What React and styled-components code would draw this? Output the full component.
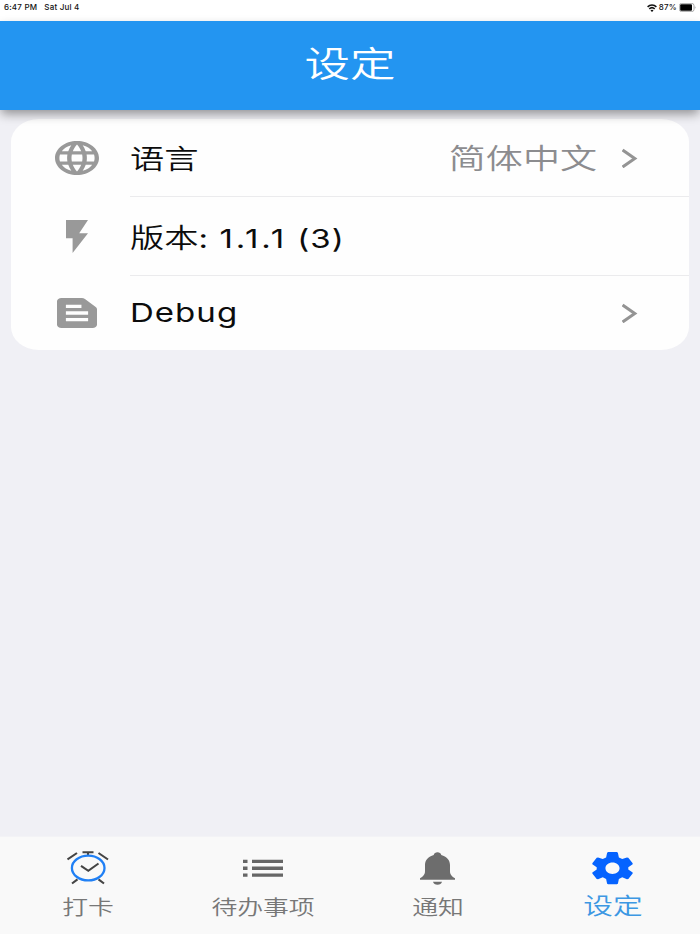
import React from 'react';
import styled, { createGlobalStyle } from 'styled-components';

const App = () => {
  return (
    <Screen>
      <GlobalStyle />
      <StatusBar>
        <StatusText>
          <span>6:47 PM</span>
          <span>Sat Jul 4</span>
        </StatusText>
        <StatusIcons>
          <WifiIcon />
          <span>87%</span>
          <BatteryIcon />
        </StatusIcons>
      </StatusBar>

      <Header>
        <Title>设定</Title>
      </Header>

      <Content>
        <Card>
          <Row $height={77}>
            <IconCell>
              <GlobeIcon />
            </IconCell>
            <RowBody $divider>
              <Label>语言</Label>
              <Value>简体中文</Value>
              <ChevronIcon />
            </RowBody>
          </Row>
          <Row $height={79}>
            <IconCell $shift={1}>
              <FlashIcon />
            </IconCell>
            <RowBody $divider>
              <Label $shift={2}>
                版本
                <Latin>
                  : <Digits>1.1.1</Digits> (3)
                </Latin>
              </Label>
            </RowBody>
          </Row>
          <Row $height={75}>
            <IconCell>
              <DocumentIcon />
            </IconCell>
            <RowBody>
              <Label $shift={-1}>
                <Latin>Debug</Latin>
              </Label>
              <ChevronIcon />
            </RowBody>
          </Row>
        </Card>
      </Content>

      <TabBar>
        <Tab>
          <AlarmIcon />
          <TabLabel>打卡</TabLabel>
        </Tab>
        <Tab>
          <ListIcon />
          <TabLabel>待办事项</TabLabel>
        </Tab>
        <Tab>
          <BellIcon />
          <TabLabel>通知</TabLabel>
        </Tab>
        <Tab>
          <GearIcon />
          <TabLabel $active>设定</TabLabel>
        </Tab>
      </TabBar>
    </Screen>
  );
};

const WifiIcon = () => (
  <svg width="10" height="8" viewBox="0 0 10 8" fill="none" stroke="#111" strokeWidth="1.5">
    <path d="M.6 2.9C3.1.5 6.9.5 9.4 2.9" />
    <path d="M2.3 4.9c1.5-1.4 3.9-1.4 5.4 0" />
    <path d="M5 8L3.5 6.4c.8-.8 2.2-.8 3 0z" fill="#111" stroke="none" />
  </svg>
);

const BatteryIcon = () => (
  <svg width="17" height="9" viewBox="0 0 17 9">
    <rect x=".4" y=".4" width="14.6" height="8.2" rx="2.2" fill="#fff" stroke="#999" strokeWidth=".8" />
    <rect x="1.2" y="1.3" width="11.8" height="6.4" rx="1" fill="#000" />
    <path d="M15.7 3.2c1.2.4 1.2 2.2 0 2.6z" fill="#aaa" />
  </svg>
);

const GlobeIcon = () => (
  <svg width="44" height="34" viewBox="2 2 20 20" preserveAspectRatio="none" fill="#999">
    <path d="M11.99 2C6.47 2 2 6.48 2 12s4.47 10 9.99 10C17.52 22 22 17.52 22 12S17.52 2 11.99 2zm6.93 6h-2.95a15.65 15.65 0 0 0-1.38-3.56A8.03 8.03 0 0 1 18.92 8zM12 4.04c.83 1.2 1.48 2.53 1.91 3.96h-3.82c.43-1.43 1.08-2.76 1.91-3.96zM4.26 14C4.1 13.36 4 12.69 4 12s.1-1.36.26-2h3.38c-.08.66-.14 1.32-.14 2s.06 1.34.14 2H4.26zm.82 2h2.95c.32 1.25.78 2.45 1.38 3.56A7.987 7.987 0 0 1 5.08 16zm2.95-8H5.08a7.987 7.987 0 0 1 4.33-3.56A15.65 15.65 0 0 0 8.03 8zM12 19.96c-.83-1.2-1.48-2.53-1.91-3.96h3.82c-.43 1.43-1.08 2.76-1.91 3.96zM14.34 14H9.66c-.09-.66-.16-1.32-.16-2s.07-1.35.16-2h4.68c.09.65.16 1.32.16 2s-.07 1.34-.16 2zm.25 5.56c.6-1.11 1.06-2.31 1.38-3.56h2.95a8.03 8.03 0 0 1-4.33 3.56zM16.36 14c.08-.66.14-1.32.14-2s-.06-1.34-.14-2h3.38c.16.64.26 1.31.26 2s-.1 1.36-.26 2h-3.38z" />
  </svg>
);

const FlashIcon = () => (
  <svg width="22" height="33" viewBox="7 2 10 20" preserveAspectRatio="none" fill="#999">
    <path d="M7 2v11h3v9l7-12h-4l4-8z" />
  </svg>
);

const DocumentIcon = () => (
  <svg width="40" height="30" viewBox="3 3 18 18" preserveAspectRatio="none" fill="#999">
    <path d="M20.41 8.41l-4.83-4.83c-.37-.37-.88-.58-1.41-.58H5c-1.1 0-2 .9-2 2v14c0 1.1.9 2 2 2h14c1.1 0 2-.9 2-2V9.83c0-.53-.21-1.04-.59-1.42zM7 7h7v2H7V7zm10 10H7v-2h10v2zm0-4H7v-2h10v2z" />
  </svg>
);

const ChevronIcon = () => (
  <svg width="16" height="20" viewBox="0 0 16 20" fill="none" stroke="#949494" strokeWidth="3">
    <path d="M.6 2L12.8 10.6.6 19" />
  </svg>
);

const AlarmIcon = () => (
  <svg width="42" height="34" viewBox="0 0 42 34" fill="none" stroke="#444" strokeWidth="2.1">
    <path d="M.5 8.5L10 2M31.5 2L41 8.5M15.5 1.3h11M21 1.5V5M10.5 28.3L5 32.5M31.5 28.3l5.5 4.2" />
    <path d="M14 14.8l7.3 5L31.5 12.5" />
    <ellipse cx="21.2" cy="17" rx="16.3" ry="12.4" stroke="#2080f5" strokeWidth="2.3" />
  </svg>
);

const ListIcon = () => (
  <svg width="40" height="34" viewBox="0 0 40 34" fill="#666">
    <path d="M0 8.7h4.5V12H0zM9 8.7h31V12H9zM0 15.6h4.5v3.3H0zM9 15.6h31v3.3H9zM0 22.4h4.5v3.3H0zM9 22.4h31v3.3H9z" />
  </svg>
);

const BellIcon = () => (
  <svg width="36" height="34" viewBox="0 0 36 34" fill="#6d6d6d">
    <path d="M17.5 1.2c-2 0-3.3 1-3.8 2.7C8.5 5.4 5 8.800 5 14v6c0 3.200-1.200 5-5 7.300v1.400h35v-1.400c-3.800-2.300-5-4.100-5-7.300v-6c0-5.200-3.500-8.600-8.700-10.100-.5-1.700-1.800-2.700-3.800-2.700z" />
    <path d="M13 30.8h9c-.5 1.9-2.2 3-4.500 3s-4-1.100-4.500-3z" />
  </svg>
);

const GearIcon = () => (
  <svg width="41" height="34" viewBox="96 64 122 101" fill="#0563ff">
    <path
      fillRule="evenodd"
      d="M144 67h26l3 2 3 14 10 5 14-5 4 1 13 16v3l-13 9v7l13 9v3l-13 16-4 1-14-6-10 5-3 14-3 2h-26l-3-2-3-14-10-5-14 6-4-1-13-16v-3l13-9v-7l-13-9v-3l13-16 4-1 14 5 10-5 3-14zM157 98c-12 0-21 8-21 17s9 17 21 17 21-8 21-17-9-17-21-17z"
    />
  </svg>
);

const GlobalStyle = createGlobalStyle`
  body {
    margin: 0;
    background: #f0f0f5;
  }

  * {
    box-sizing: border-box;
  }

  svg {
    display: block;
    flex: none;
  }
`;

const Screen = styled.div`
  display: flex;
  flex-direction: column;
  width: 100%;
  height: 934px;
  overflow: hidden;
  background: #f0f0f5;
  font-family: 'Noto Sans CJK SC', sans-serif;
`;

const StatusBar = styled.div`
  display: flex;
  justify-content: space-between;
  align-items: center;
  height: 21px;
  padding: 0 4px 6px;
  background: #fff;
  color: #111;
  font-family: Inter, sans-serif;
  font-size: 8px;
  font-weight: 500;
  letter-spacing: 0.2px;
  line-height: 15px;
`;

const StatusText = styled.div`
  display: flex;
  gap: 7px;
`;

const StatusIcons = styled.div`
  display: flex;
  align-items: center;
  gap: 2px;
`;

const Header = styled.header`
  position: relative;
  z-index: 1;
  display: flex;
  justify-content: center;
  align-items: center;
  height: 89px;
  background: #2395f1;
  box-shadow: 0 5px 10px -1px rgba(0, 0, 0, 0.4);
`;

const Title = styled.h1`
  margin: 0;
  color: #fff;
  font-size: 35px;
  font-weight: 350;
  line-height: 50px;
  transform: translateY(-4px) scaleX(1.3);
`;

const Content = styled.main`
  flex: 1;
  padding: 9px 11px;
`;

const Card = styled.section`
  overflow: hidden;
  border-radius: 28px / 23px;
  background: #fefefe;
`;

const Row = styled.div`
  display: flex;
  height: ${({ $height }) => $height}px;
`;

const IconCell = styled.div`
  display: flex;
  justify-content: center;
  align-items: center;
  width: 119px;
  padding-left: 12px;
  padding-top: ${({ $shift = 0 }) => $shift * 2}px;
`;

const RowBody = styled.div`
  display: flex;
  flex: 1;
  align-items: center;
  padding-right: 51px;
  box-shadow: ${({ $divider }) => ($divider ? '0 1px 0 #ebebed' : 'none')};
`;

const Label = styled.span`
  margin-right: auto;
  color: #0c0c0c;
  font-size: 27px;
  font-weight: 350;
  line-height: 40px;
  white-space: nowrap;
  transform: translateY(${({ $shift = 0 }) => $shift}px) scaleX(1.27);
  transform-origin: left center;
`;

const Latin = styled.span`
  font-family: Inter, sans-serif;
  font-size: 26px;
  font-weight: 400;
  letter-spacing: 0.8px;
`;

const Digits = styled.span`
  letter-spacing: 2.2px;
`;

const Value = styled.span`
  margin-right: 25px;
  color: #8c8c8f;
  font-size: 28.5px;
  font-weight: 350;
  line-height: 40px;
  white-space: nowrap;
  transform: translateY(-1px) scaleX(1.3);
  transform-origin: right center;
`;

const TabBar = styled.nav`
  display: grid;
  grid-template-columns: repeat(4, 1fr);
  height: 98px;
  border-top: 1px solid #f3f3f6;
  background: #f9f9f9;
`;

const Tab = styled.div`
  display: flex;
  flex-direction: column;
  align-items: center;
  padding-top: 14px;
`;

const TabLabel = styled.span`
  margin-top: ${({ $active }) => ($active ? 4 : 7)}px;
  color: ${({ $active }) => ($active ? '#3d98e3' : '#777')};
  font-size: ${({ $active }) => ($active ? 23 : 20)}px;
  font-weight: 350;
  line-height: 30px;
  white-space: nowrap;
  transform: scaleX(1.29);
`;

export default App;
